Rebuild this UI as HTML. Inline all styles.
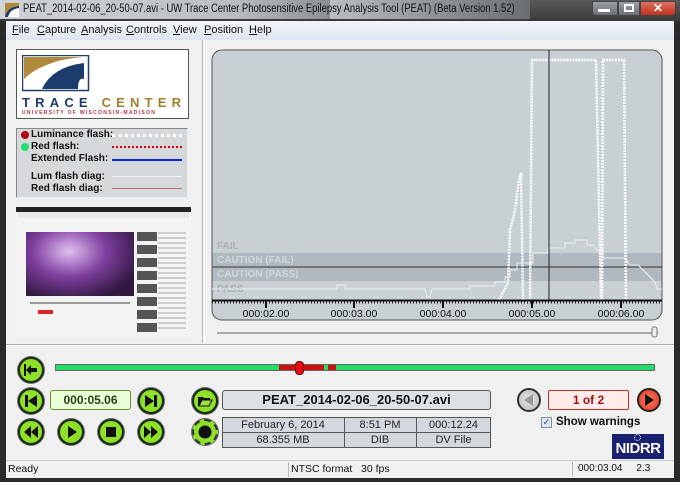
<!DOCTYPE html>
<html><head><meta charset="utf-8"><style>
*{box-sizing:border-box;margin:0;padding:0}
body{width:680px;height:482px;overflow:hidden;background:#2a2a2a;font-family:"Liberation Sans",sans-serif;font-size:11px;position:relative}
.a{position:absolute}
.btn{position:absolute;width:26px;height:26px;border-radius:50%;background:#8ee02a;border:2px solid #1a2a10;box-shadow:0 0 0 1px #6a6a6a}
.btn svg{position:absolute;left:0;top:0}
</style></head><body>
<!-- title bar -->
<div class="a" style="left:0;top:0;width:680px;height:21px;background:linear-gradient(#5a5a5a,#3a3a3a)"></div>
<div class="a" style="left:0;top:0;width:330px;height:19px;background:linear-gradient(90deg,#cfd3d6,#b9bec2 70%,#8a8f94)"></div>
<div class="a" style="left:330px;top:0;width:200px;height:19px;background:linear-gradient(90deg,#b9bec2,#6a6e72)"></div>
<svg class="a" style="left:5px;top:3px" width="14" height="14"><rect width="14" height="14" fill="#1c3c6c"/><path d="M0 14 Q2 4 14 3 L14 0 L0 0Z" fill="#b08a3a"/><path d="M3 14 Q5 6 14 5 L14 14Z" fill="#fff"/></svg>
<div class="a" style="left:23px;top:3px;font-size:11.5px;color:#111;white-space:nowrap;transform:scaleX(0.82);transform-origin:0 0">PEAT_2014-02-06_20-50-07.avi - UW Trace Center Photosensitive Epilepsy Analysis Tool (PEAT) (Beta Version 1.52)</div>
<div class="a" style="left:592px;top:1px;width:26px;height:15px;background:linear-gradient(#9aa0a6,#6a7076);border:1px solid #444;border-radius:0 0 0 4px"></div>
<div class="a" style="left:598px;top:9px;width:12px;height:3px;background:#fff"></div>
<div class="a" style="left:618px;top:1px;width:22px;height:15px;background:linear-gradient(#9aa0a6,#6a7076);border:1px solid #444"></div>
<div class="a" style="left:624px;top:4px;width:10px;height:8px;border:2px solid #fff"></div>
<div class="a" style="left:640px;top:1px;width:36px;height:15px;background:linear-gradient(#e07060,#c03020);border:1px solid #444;border-radius:0 0 4px 0;color:#fff;font-weight:bold;text-align:center;font-size:12px;line-height:13px">✕</div>
<!-- menu -->
<div class="a" style="left:6px;top:21px;width:668px;height:19px;background:linear-gradient(#f2f4f8,#dfe5f0)"></div>
<div class="a" style="left:12px;top:24px;font-size:11px;color:#111;word-spacing:0">
<span style="position:absolute;left:0"><u>F</u>ile</span><span style="position:absolute;left:25px"><u>C</u>apture</span><span style="position:absolute;left:69px"><u>A</u>nalysis</span><span style="position:absolute;left:114px"><u>C</u>ontrols</span><span style="position:absolute;left:161px"><u>V</u>iew</span><span style="position:absolute;left:192px"><u>P</u>osition</span><span style="position:absolute;left:237px"><u>H</u>elp</span></div>
<!-- main body -->
<div class="a" style="left:6px;top:40px;width:668px;height:421px;background:#f0f0f0"></div>
<div class="a" style="left:6px;top:40px;width:197px;height:303px;border-right:1px solid #bbb"></div>
<div class="a" style="left:204px;top:40px;width:1px;height:303px;background:#fff"></div>
<div class="a" style="left:6px;top:344px;width:668px;height:2px;border-top:1px solid #aaa;border-bottom:1px solid #fff"></div>
<!-- logo -->
<div class="a" style="left:16px;top:49px;width:173px;height:70px;background:#fff;border:1px solid #555"></div>
<svg class="a" style="left:22px;top:55px" width="68" height="37"><rect x="0.5" y="0.5" width="66" height="35" fill="#fff" stroke="#1c3c6c" stroke-width="1.5"/><path d="M2 2 L62 2 Q40 4 30 8 Q12 14 2 24Z" fill="#b08a3a"/><path d="M20 34 Q30 12 62 8 L62 24 Q56 22 56 34Z" fill="#1c3c6c"/></svg>
<div class="a" style="left:22px;top:95px;font-size:13px;font-weight:bold;letter-spacing:5.2px;color:#1c3c6c">TRACE <span style="color:#a0802e">CENTER</span></div>
<div class="a" style="left:22px;top:110px;font-size:5px;font-weight:bold;letter-spacing:1.3px;color:#c0303a">UNIVERSITY OF WISCONSIN-MADISON</div>
<!-- legend -->
<div class="a" style="left:16px;top:128px;width:172px;height:70px;background:#d6d9dc;border:1px solid #888;border-right-color:#eee;border-bottom-color:#eee"></div>
<div class="a" style="left:21px;top:131px;width:8px;height:8px;border-radius:50%;background:#b00010"></div>
<div class="a" style="left:21px;top:143px;width:8px;height:8px;border-radius:50%;background:#20e070"></div>
<div class="a" style="left:31px;top:129px;font-weight:bold;color:#111;line-height:12px;font-size:10px">Luminance flash:<br>Red flash:<br>Extended Flash:</div>
<div class="a" style="left:31px;top:171px;font-weight:bold;color:#111;line-height:12px;font-size:10px">Lum flash diag:<br>Red flash diag:</div>
<div class="a" style="left:112px;top:134px;width:70px;height:3px;border-top:3px dotted #fff"></div>
<div class="a" style="left:112px;top:146px;width:70px;height:2px;border-top:2px dotted #d00"></div>
<div class="a" style="left:112px;top:159px;width:70px;height:2px;background:#1020e0"></div>
<div class="a" style="left:112px;top:176px;width:70px;height:1px;background:#f0f0f0"></div>
<div class="a" style="left:112px;top:188px;width:70px;height:1px;background:#c87070"></div>
<!-- thumbnail -->
<div class="a" style="left:16px;top:207px;width:175px;height:131px;background:#f4f4f4;border-top:5px solid #222"></div>
<div class="a" style="left:18px;top:212px;width:171px;height:6px;background:#e6e8ea"></div>
<div class="a" style="left:26px;top:232px;width:108px;height:64px;background:radial-gradient(ellipse at 40% 30%,#e0c0f0,#8040a0 40%,#301840 80%)"></div>
<div class="a" style="left:137px;top:232px;width:20px;height:100px;background:repeating-linear-gradient(#555 0 9px,#f4f4f4 9px 13px)"></div>
<div class="a" style="left:158px;top:232px;width:28px;height:100px;background:repeating-linear-gradient(#ccc 0 2px,#f4f4f4 2px 5px)"></div>
<div class="a" style="left:30px;top:302px;width:100px;height:2px;background:#999"></div>
<div class="a" style="left:38px;top:310px;width:15px;height:4px;background:#d22"></div>
<!-- graph -->
<svg class="a" style="left:205px;top:40px" width="469" height="304">
<rect x="7" y="10" width="450" height="270" rx="10" fill="#c8d0d4" stroke="#555" stroke-width="1"/>
<rect x="7.5" y="213" width="449" height="14" fill="#b0b9bf"/>
<rect x="7.5" y="227" width="449" height="14" fill="#b0b9bf"/>
<line x1="7.5" y1="227" x2="457" y2="227" stroke="#333" stroke-width="1"/>
<g font-size="10" font-family="Liberation Sans" font-weight="bold">
<text x="12" y="209" fill="#a8b0b6">FAIL</text><text x="12" y="223" fill="#d0d6da">CAUTION (FAIL)</text><text x="12" y="237" fill="#d0d6da">CAUTION (PASS)</text><text x="12" y="252" fill="#a8b0b6">PASS</text></g>
<polyline fill="none" stroke="#eef0f2" stroke-width="1" points="7,249 132,249 132,245 140,245 140,249 220,249 222,257 225,257 227,249 265,249 265,246 290,246 290,242 300,242 300,237 305,237 305,230 312,230 312,223 328,223 328,213 343,213 343,208 360,208 360,203 370,203 370,200 382,200 382,205 388,205 392,210 398,210 398,218 420,218 425,225 433,225 440,232 445,237 450,242 452,249 457,249"/>
<g fill="none" stroke="#fff" stroke-width="2.5" stroke-dasharray="2 1">
<polyline points="294,260 303,243 305,190 310,170 314,140 316,133 318,260 322,262 325,260 327,20 391,20 396,260"/>
<polyline points="397,260 398,20 419,20 421,260"/>
</g>
<line x1="344" y1="10" x2="344" y2="260" stroke="#222" stroke-width="1"/>
<line x1="7" y1="260.5" x2="457" y2="260.5" stroke="#111" stroke-width="2"/>
<line x1="7" y1="262" x2="457" y2="262" stroke="#222" stroke-width="3" stroke-dasharray="1 2"/>
<g stroke="#111" stroke-width="2"><line x1="61" y1="260" x2="61" y2="268"/><line x1="149" y1="260" x2="149" y2="268"/><line x1="238" y1="260" x2="238" y2="268"/><line x1="327" y1="260" x2="327" y2="268"/><line x1="416" y1="260" x2="416" y2="268"/></g>
<g fill="#111" font-size="10.5" font-family="Liberation Sans" text-anchor="middle">
<text x="61" y="277">000:02.00</text><text x="149" y="277">000:03.00</text><text x="238" y="277">000:04.00</text><text x="327" y="277">000:05.00</text><text x="416" y="277">000:06.00</text></g>
<line x1="12" y1="293" x2="453" y2="293" stroke="#aaa" stroke-width="2"/>
<rect x="447" y="287" width="5" height="10" rx="2" fill="#eee" stroke="#777"/>
</svg>
<!-- scrub -->
<div class="btn" style="left:18px;top:357px"><svg width="22" height="22"><rect x="4" y="5" width="2" height="12" fill="#111"/><path d="M6 11 L11 6 L11 9 L17 9 L17 13 L11 13 L11 16Z" fill="#111"/></svg></div>
<div class="a" style="left:55px;top:364px;width:600px;height:7px;background:#22dd66;border:1px solid #666"></div>
<div class="a" style="left:279px;top:365px;width:45px;height:5px;background:#cc1010"></div>
<div class="a" style="left:325px;top:365px;width:2px;height:5px;background:#22dd66"></div>
<div class="a" style="left:328px;top:365px;width:8px;height:5px;background:#cc1010"></div>
<div class="a" style="left:295px;top:361px;width:9px;height:14px;border-radius:4px;background:#e01010;border:1px solid #700"></div>
<!-- transport -->
<div class="btn" style="left:18px;top:388px"><svg width="22" height="22"><rect x="5" y="5" width="3" height="12" fill="#111"/><path d="M17 5 L8 11 L17 17Z" fill="#111"/></svg></div>
<div class="a" style="left:50px;top:390px;width:81px;height:20px;background:#eaffd8;border:1px solid #6a9030;border-radius:3px;color:#2a4010;font-weight:bold;font-size:12px;text-align:center;line-height:18px">000:05.06</div>
<div class="btn" style="left:138px;top:388px"><svg width="22" height="22"><path d="M5 5 L14 11 L5 17Z" fill="#111"/><rect x="14" y="5" width="3" height="12" fill="#111"/></svg></div>
<div class="btn" style="left:18px;top:419px"><svg width="22" height="22"><path d="M11 5 L4 11 L11 17Z M18 5 L11 11 L18 17Z" fill="#111"/></svg></div>
<div class="btn" style="left:58px;top:419px"><svg width="22" height="22"><path d="M8 5 L17 11 L8 17Z" fill="#111"/></svg></div>
<div class="btn" style="left:98px;top:419px"><svg width="22" height="22"><rect x="6" y="6" width="10" height="10" fill="#111"/></svg></div>
<div class="btn" style="left:138px;top:419px"><svg width="22" height="22"><path d="M4 5 L11 11 L4 17Z M11 5 L18 11 L11 17Z" fill="#111"/></svg></div>
<div class="btn" style="left:192px;top:388px"><svg width="22" height="22"><path d="M4 7 L9 7 L10 8 L16 8 L16 16 L4 16Z" fill="#111"/><path d="M5 16 L8 10 L18 10 L15 16Z" fill="#9ee040" stroke="#111"/></svg></div>
<div class="btn" style="left:192px;top:419px;border:2px dashed #333"><svg width="22" height="22"><circle cx="11" cy="11" r="6.5" fill="#111"/></svg></div>
<div class="a" style="left:222px;top:390px;width:269px;height:20px;background:#dde1e4;border:1px solid #555;border-radius:3px;text-align:center;font-weight:bold;font-size:13px;line-height:18px;color:#111">PEAT_2014-02-06_20-50-07.avi</div>
<div class="a" style="left:222px;top:417px;width:269px;height:31px;background:#d3d8dc;border:1px solid #555"></div>
<div class="a" style="left:222px;top:432px;width:269px;height:1px;background:#555"></div>
<div class="a" style="left:344px;top:417px;width:1px;height:31px;background:#555"></div>
<div class="a" style="left:416px;top:417px;width:1px;height:31px;background:#555"></div>
<div class="a" style="left:222px;top:419px;width:122px;text-align:center;color:#222">February 6, 2014</div>
<div class="a" style="left:222px;top:434px;width:122px;text-align:center;color:#222">68.355 MB</div>
<div class="a" style="left:344px;top:419px;width:72px;text-align:center;color:#222">8:51 PM</div>
<div class="a" style="left:344px;top:434px;width:72px;text-align:center;color:#222">DIB</div>
<div class="a" style="left:416px;top:419px;width:75px;text-align:center;color:#222">000:12.24</div>
<div class="a" style="left:416px;top:434px;width:75px;text-align:center;color:#222">DV File</div>
<!-- warnings nav -->
<div class="a" style="left:517px;top:388px;width:24px;height:24px;border-radius:50%;background:radial-gradient(#e8e8e8,#b8b8b8);border:2px solid #333"><svg width="20" height="20"><path d="M14 4 L5 10 L14 16Z" fill="#999"/></svg></div>
<div class="a" style="left:548px;top:390px;width:81px;height:20px;background:#ffecea;border:1px solid #c03020;border-radius:2px;color:#a01010;font-weight:bold;font-size:12px;text-align:center;line-height:18px">1 of 2</div>
<div class="a" style="left:637px;top:388px;width:24px;height:24px;border-radius:50%;background:radial-gradient(#ff8060,#e03020);border:2px solid #222"><svg width="20" height="20"><path d="M6 4 L15 10 L6 16Z" fill="#111"/></svg></div>
<div class="a" style="left:541px;top:417px;width:11px;height:11px;background:#dde6f0;border:1px solid #8090a0;font-size:9px;line-height:9px;text-align:center;color:#2040a0">✓</div>
<div class="a" style="left:556px;top:416px;font-weight:bold;font-size:11.5px;color:#111">Show warnings</div>
<div class="a" style="left:612px;top:434px;width:52px;height:25px;background:#1a2070;color:#fff;font-weight:bold;font-size:15px;text-align:center;line-height:30px;letter-spacing:-0.5px">NIDRR</div>
<div class="a" style="left:634px;top:434px;width:7px;height:7px;border:1px dotted #fff;border-radius:50%"></div>
<!-- status -->
<div class="a" style="left:6px;top:460px;width:668px;height:18px;background:#f0f0f0;border-top:1px solid #ccc"></div>
<div class="a" style="left:288px;top:462px;width:1px;height:15px;background:#bbb"></div>
<div class="a" style="left:572px;top:462px;width:1px;height:15px;background:#bbb"></div>
<div class="a" style="left:8px;top:463px;font-size:10.5px;color:#111">Ready</div>
<div class="a" style="left:291px;top:463px;font-size:10.5px;color:#111;white-space:pre">NTSC format   30 fps</div>
<div class="a" style="left:578px;top:463px;font-size:10px;color:#111;white-space:pre">000:03.04     2.3</div>
</body></html>
